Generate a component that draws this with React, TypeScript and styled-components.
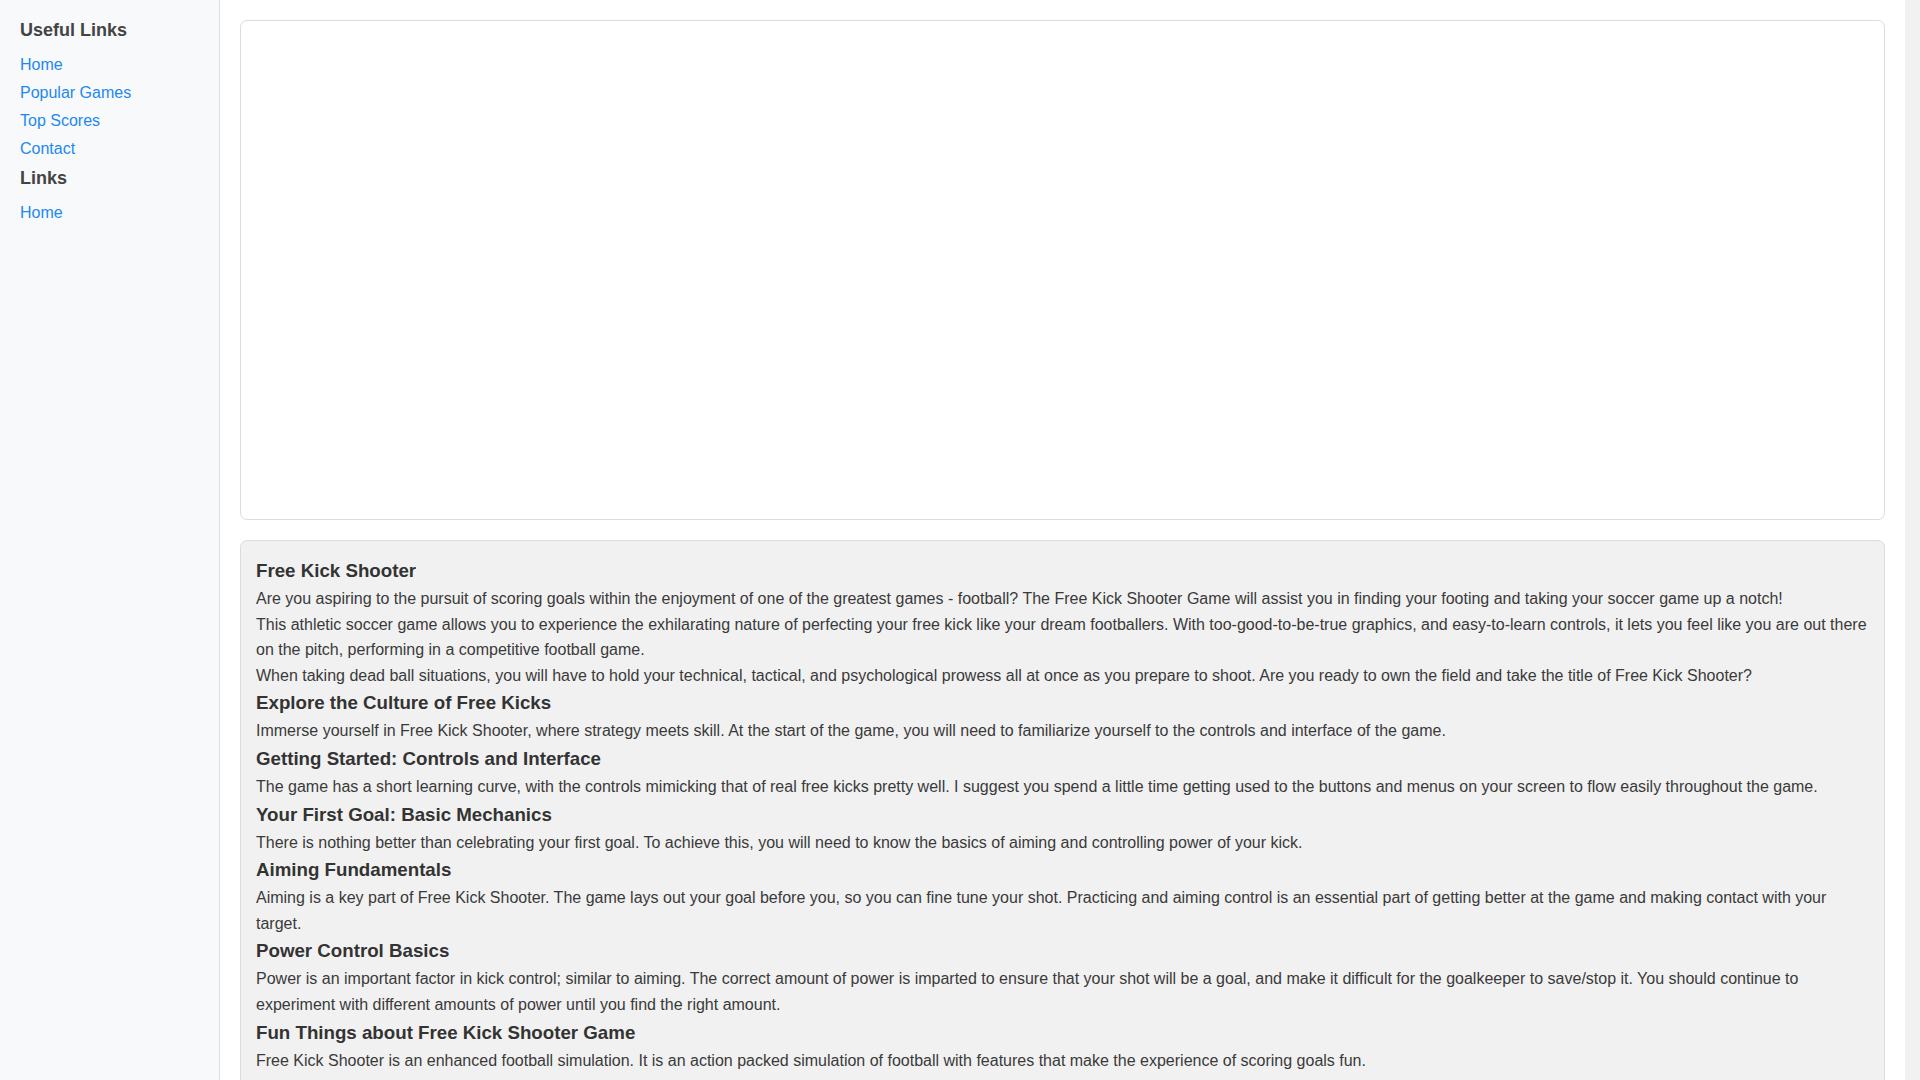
import React from 'react';
import styled, { createGlobalStyle } from 'styled-components';

const GlobalStyle = createGlobalStyle`
  html, body {
    margin: 0;
    padding: 0;
  }

  body {
    /* leave room for the page scrollbar the reference shows */
    padding-right: 15px;
    background: #f1f1f1;
    font-family: "Liberation Sans", Arial, sans-serif;
    font-size: 16px;
    color: #333;
  }

  * {
    box-sizing: border-box;
  }
`;

type Section = {
  title: string;
  paragraphs: string[];
};

const sidebarGroups = [
  { title: 'Useful Links', links: ['Home', 'Popular Games', 'Top Scores', 'Contact'] },
  { title: 'Links', links: ['Home'] }
];

const sections: Section[] = [
  {
    title: 'Free Kick Shooter',
    paragraphs: [
      'Are you aspiring to the pursuit of scoring goals within the enjoyment of one of the greatest games - football? The Free Kick Shooter Game will assist you in finding your footing and taking your soccer game up a notch!',
      'This athletic soccer game allows you to experience the exhilarating nature of perfecting your free kick like your dream footballers. With too-good-to-be-true graphics, and easy-to-learn controls, it lets you feel like you are out there on the pitch, performing in a competitive football game.',
      'When taking dead ball situations, you will have to hold your technical, tactical, and psychological prowess all at once as you prepare to shoot. Are you ready to own the field and take the title of Free Kick Shooter?'
    ]
  },
  {
    title: 'Explore the Culture of Free Kicks',
    paragraphs: [
      'Immerse yourself in Free Kick Shooter, where strategy meets skill. At the start of the game, you will need to familiarize yourself to the controls and interface of the game.'
    ]
  },
  {
    title: 'Getting Started: Controls and Interface',
    paragraphs: [
      'The game has a short learning curve, with the controls mimicking that of real free kicks pretty well. I suggest you spend a little time getting used to the buttons and menus on your screen to flow easily throughout the game.'
    ]
  },
  {
    title: 'Your First Goal: Basic Mechanics',
    paragraphs: [
      'There is nothing better than celebrating your first goal. To achieve this, you will need to know the basics of aiming and controlling power of your kick.'
    ]
  },
  {
    title: 'Aiming Fundamentals',
    paragraphs: [
      'Aiming is a key part of Free Kick Shooter. The game lays out your goal before you, so you can fine tune your shot. Practicing and aiming control is an essential part of getting better at the game and making contact with your target.'
    ]
  },
  {
    title: 'Power Control Basics',
    paragraphs: [
      'Power is an important factor in kick control; similar to aiming. The correct amount of power is imparted to ensure that your shot will be a goal, and make it difficult for the goalkeeper to save/stop it. You should continue to experiment with different amounts of power until you find the right amount.'
    ]
  },
  {
    title: 'Fun Things about Free Kick Shooter Game',
    paragraphs: [
      'Free Kick Shooter is an enhanced football simulation. It is an action packed simulation of football with features that make the experience of scoring goals fun.'
    ]
  }
];

const Layout = styled.div`
  display: flex;
  align-items: stretch;
  min-height: 100vh;
  background: #fff;
`;

const Sidebar = styled.aside`
  flex: 0 0 220px;
  width: 220px;
  padding: 19px 20px 20px;
  background: #f8f9fa;
  border-right: 1px solid #dedede;
`;

const SideTitle = styled.h3`
  margin: 0 0 9px;
  font-size: 18px;
  line-height: 23px;
  font-weight: bold;
  color: #444;
`;

const SideList = styled.ul`
  list-style: none;
  margin: 0 0 4px;
  padding: 0;
`;

const SideItem = styled.li`
  line-height: 28px;
  font-size: 16px;
`;

const SideLink = styled.a`
  color: #1e88f0;
  text-decoration: none;
`;

const Main = styled.main`
  flex: 1;
  min-width: 0;
  display: flex;
  flex-direction: column;
  gap: 20px;
  padding: 20px;
`;

const Card = styled.section<{ $muted?: boolean }>`
  border: 1px solid #dcdcdc;
  border-radius: 7px;
  background: ${(p) => (p.$muted ? '#f1f1f1' : '#fff')};
  padding: ${(p) => (p.$muted ? '15px 15px 15px' : '0')};
`;

const GameFrame = styled(Card)`
  height: 500px;
`;

const Heading = styled.h2`
  margin: 0;
  font-size: 18.72px;
  line-height: 30px;
  font-weight: bold;
  color: #333;
`;

const Paragraph = styled.p`
  margin: 0;
  font-size: 16px;
  line-height: 25.6px;
  color: #3a3a3a;
`;

export default function App () {
  return (
    <>
      <GlobalStyle />
      <Layout>
        <Sidebar>
          {sidebarGroups.map((group) => (
            <div key={group.title}>
              <SideTitle>{group.title}</SideTitle>
              <SideList>
                {group.links.map((link) => (
                  <SideItem key={link}>
                    <SideLink href='#'>{link}</SideLink>
                  </SideItem>
                ))}
              </SideList>
            </div>
          ))}
        </Sidebar>
        <Main>
          <GameFrame />
          <Card $muted>
            {sections.map((section) => (
              <div key={section.title}>
                <Heading>{section.title}</Heading>
                {section.paragraphs.map((text, i) => (
                  <Paragraph key={i}>{text}</Paragraph>
                ))}
              </div>
            ))}
          </Card>
        </Main>
      </Layout>
    </>
  );
}
